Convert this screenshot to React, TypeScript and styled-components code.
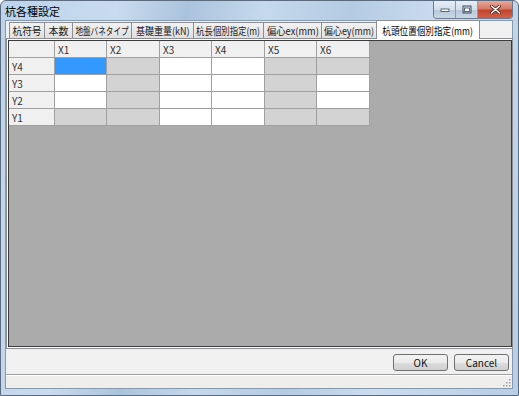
import React from 'react';
import styled, { createGlobalStyle } from 'styled-components';

type CellKind = 'white' | 'gray' | 'sel';

const GlobalStyle = createGlobalStyle`
    html, body {
        margin: 0;
        padding: 0;
        background: #ffffff;
    }
    body {
        font-family: "Noto Sans CJK JP", "DejaVu Sans", sans-serif;
        font-size: 10px;
        color: #000;
    }
`;

// width = tab box, squeeze = horizontal scale of the label (the original font is narrower)
const tabs = [
    { label: '杭符号', width: 36, squeeze: 0.97 },
    { label: '本数', width: 29, squeeze: 1 },
    { label: '地盤バネタイプ', width: 60, squeeze: 0.76 },
    { label: '基礎重量(kN)', width: 63, squeeze: 0.9 },
    { label: '杭長個別指定(m)', width: 71, squeeze: 0.84 },
    { label: '偏心ex(mm)', width: 59, squeeze: 0.93 },
    { label: '偏心ey(mm)', width: 56, squeeze: 0.89 },
];

const columns = ['X1', 'X2', 'X3', 'X4', 'X5', 'X6'];

const rows: { name: string; cells: CellKind[] }[] = [
    { name: 'Y4', cells: ['sel', 'gray', 'white', 'white', 'gray', 'gray'] },
    { name: 'Y3', cells: ['white', 'gray', 'white', 'white', 'gray', 'white'] },
    { name: 'Y2', cells: ['white', 'gray', 'white', 'white', 'gray', 'white'] },
    { name: 'Y1', cells: ['gray', 'gray', 'white', 'white', 'gray', 'gray'] },
];

const App: React.FC = () => {
    return (
        <>
            <GlobalStyle />
            <Window>
                <TitleBar>
                    <Title>杭各種設定</Title>
                    <Caption>
                        <CapButton>
                            <svg width="10" height="6" viewBox="0 0 10 6">
                                <rect x="1" y="2" width="8" height="2.5" fill="#fff" stroke="#3b4a5c" strokeWidth="0.8" />
                            </svg>
                        </CapButton>
                        <CapButton>
                            <svg width="10" height="9" viewBox="0 0 10 9">
                                <rect x="1" y="1" width="8" height="7" fill="none" stroke="#3b4a5c" strokeWidth="1" />
                                <rect x="2.5" y="3" width="5" height="3.5" fill="#fff" stroke="#3b4a5c" strokeWidth="0.8" />
                            </svg>
                        </CapButton>
                        <CloseButton>
                            <svg width="11" height="9" viewBox="0 0 11 9">
                                <path d="M1.5 1 L9.5 8 M9.5 1 L1.5 8" stroke="#4a1a14" strokeWidth="3" strokeLinecap="round" />
                                <path d="M1.5 1 L9.5 8 M9.5 1 L1.5 8" stroke="#ffffff" strokeWidth="1.6" strokeLinecap="round" />
                            </svg>
                        </CloseButton>
                    </Caption>
                </TitleBar>
                <Client>
                    <TabStrip>
                        {tabs.map((t) => (
                            <Tab key={t.label} $width={t.width}>
                                <TabLabel $squeeze={t.squeeze}>{t.label}</TabLabel>
                            </Tab>
                        ))}
                        <ActiveTab>
                            <TabLabel $squeeze={0.86}>杭頭位置個別指定(mm)</TabLabel>
                        </ActiveTab>
                    </TabStrip>
                    <TabPage>
                        <GridArea>
                            <Grid>
                                <HeadCell />
                                {columns.map((c) => (
                                    <HeadCell key={c}>{c}</HeadCell>
                                ))}
                                {rows.map((r) => (
                                    <React.Fragment key={r.name}>
                                        <HeadCell>{r.name}</HeadCell>
                                        {r.cells.map((k, i) => (
                                            <Cell key={i} $kind={k} />
                                        ))}
                                    </React.Fragment>
                                ))}
                            </Grid>
                        </GridArea>
                    </TabPage>
                    <ButtonRow>
                        <PushButton>OK</PushButton>
                        <PushButton>Cancel</PushButton>
                    </ButtonRow>
                    <StatusBar>
                        <Grip>
                            <svg width="9" height="9" viewBox="0 0 9 9">
                                {[[7, 1], [4, 4], [7, 4], [1, 7], [4, 7], [7, 7]].map(([x, y]) => (
                                    <rect key={`${x}-${y}`} x={x} y={y} width="1.5" height="1.5" fill="#9aa0a8" />
                                ))}
                            </svg>
                        </Grip>
                    </StatusBar>
                </Client>
            </Window>
        </>
    );
};

export default App;

const Window = styled.div`
    width: 519px;
    height: 396px;
    box-sizing: border-box;
    display: flex;
    flex-direction: column;
    border: 1px solid #5b6c80;
    border-radius: 6px 6px 0 0;
    background: linear-gradient(100deg, #bcd3ea 0%, #c9dbee 20%, #aac3dd 32%, #c6d9ec 45%, #b4cbe3 60%, #cbdcee 75%, #b8cfe7 100%);
    overflow: hidden;
`;

const TitleBar = styled.div`
    height: 19px;
    display: flex;
    align-items: flex-start;
    padding-left: 4px;
`;

const Title = styled.div`
    font-size: 11px;
    line-height: 20px;
    color: #000;
`;

const Caption = styled.div`
    margin-left: auto;
    margin-right: 5px;
    display: flex;
    height: 17px;
    border: 1px solid #6b7c92;
    border-top: none;
    border-radius: 0 0 4px 4px;
    overflow: hidden;
`;

const CapButton = styled.div`
    width: 21px;
    display: flex;
    align-items: center;
    justify-content: center;
    border-right: 1px solid #8a9bb0;
    background: linear-gradient(#e6eef7 0%, #d3deeb 50%, #b8c8da 51%, #c9d6e5 100%);
`;

const CloseButton = styled.div`
    width: 34px;
    display: flex;
    align-items: center;
    justify-content: center;
    background: linear-gradient(#e9a99c 0%, #d67a66 45%, #c2452c 55%, #d0604a 100%);
`;

const Client = styled.div`
    flex: 1;
    margin: 0 5px 6px 4px;
    background: #f0f0f0;
    display: flex;
    flex-direction: column;
    border: 1px solid #8799ad;
`;

const TabStrip = styled.div`
    height: 17px;
    display: flex;
    align-items: flex-end;
    padding-left: 3px;
    position: relative;
    z-index: 1;
`;

const Tab = styled.div<{ $width: number }>`
    width: ${(p) => p.$width}px;
    height: 16px;
    box-sizing: border-box;
    border: 1px solid #8c8e94;
    border-bottom: none;
    margin-right: -1px;
    background: linear-gradient(#f2f2f2, #e0e0e0);
    color: #1a1a1a;
    display: flex;
    align-items: center;
    justify-content: center;
    white-space: nowrap;
    font-size: 10px;
`;

const ActiveTab = styled.div`
    width: 104px;
    height: 19px;
    box-sizing: border-box;
    border: 1px solid #8c8e94;
    border-bottom: none;
    background: #ffffff;
    margin-bottom: -1px;
    display: flex;
    align-items: center;
    justify-content: center;
    white-space: nowrap;
    font-size: 10px;
`;

const TabLabel = styled.span<{ $squeeze: number }>`
    display: inline-block;
    flex-shrink: 0;
    transform: scaleX(${(p) => p.$squeeze});
`;

const TabPage = styled.div`
    height: 311px;
    box-sizing: border-box;
    width: 507px;
    border: 1px solid #8c8e94;
    background: #ffffff;
    padding: 1px 0 1px 1px;
`;

const GridArea = styled.div`
    height: 100%;
    width: 504px;
    box-sizing: border-box;
    border: 1px solid #3c3c3c;
    background: #ababab;
`;

const Grid = styled.div`
    display: grid;
    grid-template-columns: 46px 52px 53px 52px 53px 52px 53px;
    grid-auto-rows: 17px;
    width: max-content;
`;

const HeadCell = styled.div`
    box-sizing: border-box;
    border-right: 1px solid #a0a0a0;
    border-bottom: 1px solid #a0a0a0;
    background: #f0f0f0;
    padding-left: 3px;
    display: flex;
    align-items: center;
    font-size: 10px;
    color: #333;
`;

const cellColor: Record<CellKind, string> = {
    white: '#ffffff',
    gray: '#d3d3d3',
    sel: '#3399ff',
};

const Cell = styled.div<{ $kind: CellKind }>`
    box-sizing: border-box;
    border-right: 1px solid #a0a0a0;
    border-bottom: 1px solid #a0a0a0;
    background: ${(p) => cellColor[p.$kind]};
`;

const ButtonRow = styled.div`
    height: 24px;
    display: flex;
    justify-content: flex-end;
    align-items: center;
    gap: 6px;
    padding: 1px 3px 0 0;
    border-bottom: 1px solid #a0a0a0;
`;

const PushButton = styled.div`
    width: 55px;
    height: 17px;
    box-sizing: border-box;
    border: 1px solid #707070;
    border-radius: 3px;
    background: linear-gradient(#f2f2f2 0%, #ebebeb 50%, #dddddd 51%, #cfcfcf 100%);
    display: flex;
    align-items: center;
    justify-content: center;
    font-size: 10px;
    color: #111;
`;

const StatusBar = styled.div`
    flex: 1;
    background: #f0eded;
    border-top: 1px solid #ffffff;
    display: flex;
    justify-content: flex-end;
    align-items: flex-end;
`;

const Grip = styled.div`
    width: 11px;
    height: 11px;
    display: flex;
    align-items: center;
    justify-content: center;
`;
